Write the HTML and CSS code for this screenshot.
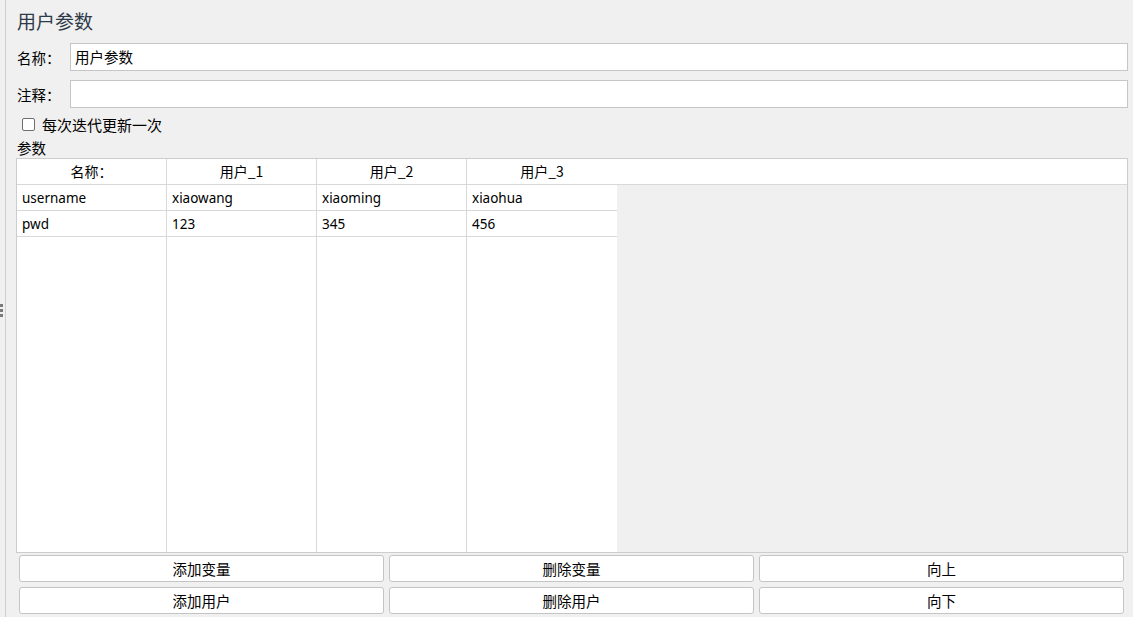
FILE: index.html
```html
<!DOCTYPE html>
<html lang="zh">
<head>
<meta charset="utf-8">
<title>用户参数</title>
<link rel="stylesheet" href="styles.css">
</head>
<body>
<div class="app">
  <div class="splitter">
    <div class="grip"><span></span><span></span><span></span></div>
  </div>
  <div class="panel">
    <div class="title">用户参数</div>
    <div class="field">
      <label class="label">名称：</label>
      <div class="input">用户参数</div>
    </div>
    <div class="field">
      <label class="label">注释：</label>
      <div class="input"></div>
    </div>
    <div class="check-row">
      <span class="checkbox"></span>
      <span>每次迭代更新一次</span>
    </div>
    <div class="section-label">参数</div>
    <div class="table">
      <div class="thead">
        <div class="th">名称：</div>
        <div class="th">用户_1</div>
        <div class="th">用户_2</div>
        <div class="th">用户_3</div>
        <div class="th filler"></div>
      </div>
      <div class="tbody">
        <div class="td">username</div>
        <div class="td">xiaowang</div>
        <div class="td">xiaoming</div>
        <div class="td">xiaohua</div>
        <div class="td">pwd</div>
        <div class="td">123</div>
        <div class="td">345</div>
        <div class="td">456</div>
        <div class="td empty"></div>
        <div class="td empty"></div>
        <div class="td empty"></div>
        <div class="td empty"></div>
      </div>
    </div>
    <div class="buttons">
      <button class="btn">添加变量</button>
      <button class="btn">删除变量</button>
      <button class="btn">向上</button>
      <button class="btn">添加用户</button>
      <button class="btn">删除用户</button>
      <button class="btn">向下</button>
    </div>
  </div>
</div>
</body>
</html>
```
FILE: styles.css
```css
* { box-sizing: border-box; }
html, body { margin: 0; height: 100%; }
body {
  background: #f0f0f0;
  font-family: "Noto Sans", "Noto Sans CJK SC", sans-serif;
  font-size: 14px;
  color: #000;
  overflow: hidden;
}
.app {
  display: flex;
  height: 617px;
}
.splitter {
  width: 6px;
  border-right: 1px solid #cfcfcf;
  display: flex;
  align-items: center;
}
.grip {
  display: flex;
  flex-direction: column;
  gap: 2px;
  margin-top: 4px;
}
.grip span {
  display: block;
  width: 3px;
  height: 3px;
  background: #7a7a7a;
}
.panel {
  flex: 1;
  display: flex;
  flex-direction: column;
  padding: 8px 5px 0 10px;
}
.title {
  font-family: "Noto Sans CJK SC", sans-serif;
  font-size: 19px;
  line-height: 26px;
  height: 26px;
  color: #2e3a48;
  padding-left: 1px;
  margin-bottom: 9px;
}
.field {
  display: flex;
  align-items: center;
  height: 28px;
  margin-bottom: 9px;
}
.label {
  font-family: "Noto Sans CJK SC", sans-serif;
  font-size: 14.5px;
  width: 54px;
  padding-left: 1px;
  flex: none;
}
.input {
  flex: 1;
  height: 28px;
  border: 1px solid #c6c6c6;
  background: #fff;
  padding: 0 4px;
  line-height: 26px;
  font-family: "Noto Sans CJK SC", sans-serif;
  font-size: 14.5px;
}
.check-row {
  display: flex;
  align-items: center;
  gap: 7px;
  height: 18px;
  padding-left: 6px;
  margin-top: -2px;
  font-family: "Noto Sans CJK SC", sans-serif;
  font-size: 15px;
}
.checkbox {
  width: 13px;
  height: 13px;
  border: 1px solid #6f6f6f;
  border-radius: 2px;
  background: #fff;
  flex: none;
}
.section-label {
  font-family: "Noto Sans CJK SC", sans-serif;
  font-size: 14.5px;
  height: 17px;
  line-height: 17px;
  padding-left: 1px;
  margin-top: 6px;
  margin-bottom: 2px;
}
.table {
  height: 395px;
  border: 1px solid #cdcdcd;
  background: #f0f0f0;
  display: flex;
  flex-direction: column;
}
.thead {
  display: flex;
  height: 26px;
  background: #fff;
  border-bottom: 1px solid #d8d8d8;
  flex: none;
}
.th {
  width: 150px;
  flex: none;
  text-align: center;
  line-height: 25px;
  border-right: 1px solid #d8d8d8;
  font-family: "Noto Sans CJK SC", sans-serif;
  font-size: 14px;
}
.th:nth-child(4) { border-right: none; }
.th.filler {
  flex: 1;
  border-right: none;
}
.tbody {
  flex: 1;
  width: 600px;
  display: grid;
  grid-template-columns: repeat(4, 150px);
  grid-template-rows: 26px 26px 1fr;
  background: #fff;
}
.td {
  border-right: 1px solid #d8d8d8;
  border-bottom: 1px solid #d8d8d8;
  padding: 2px 0 0 5px;
  line-height: 23px;
  font-size: 13.5px;
}
.td:nth-child(4n) { border-right: none; }
.td.empty { border-bottom: none; }
.buttons {
  display: grid;
  grid-template-columns: repeat(3, 365px);
  column-gap: 5px;
  row-gap: 5px;
  padding: 2px 0 0 3px;
}
.btn {
  height: 27px;
  background: #fff;
  border: 1px solid #c4c4c4;
  border-radius: 3px;
  font-family: "Noto Sans CJK SC", sans-serif;
  font-size: 14.5px;
  color: #000;
  padding: 0;
}
```
